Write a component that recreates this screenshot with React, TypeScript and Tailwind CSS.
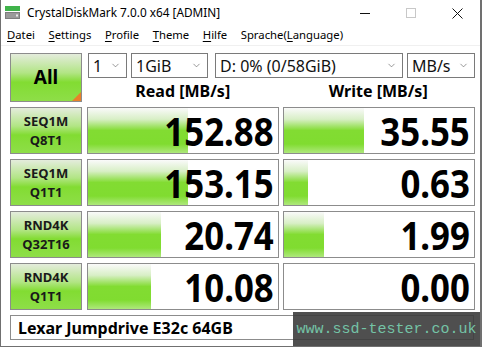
import { ChevronDown } from "lucide-react";

const font = "font-['Segoe_UI','Noto_Sans','Open_Sans',sans-serif]";

const rows = [
  { a: "SEQ1M", b: "Q8T1", read: "152.88", write: "35.55", rw: 100, ww: 80 },
  { a: "SEQ1M", b: "Q1T1", read: "153.15", write: "0.63", rw: 100, ww: 24 },
  { a: "RND4K", b: "Q32T16", read: "20.74", write: "1.99", rw: 73, ww: 40 },
  { a: "RND4K", b: "Q1T1", read: "10.08", write: "0.00", rw: 63, ww: 0 },
];

const menu = [
  ["D", "atei"],
  ["S", "ettings"],
  ["P", "rofile"],
  ["T", "heme"],
  ["H", "ilfe"],
];

function Select({ w, text }: { w: string; text: string }) {
  return (
    <div
      className={`${w} h-[25px] border border-[#7a7a7a] bg-white flex items-center justify-between pl-[4px] pr-[5px] text-[16px] text-[#111]`}
    >
      <span className="leading-none">{text}</span>
      <ChevronDown size={11} strokeWidth={1.3} className="text-[#555]" />
    </div>
  );
}

function Cell({ value, bar }: { value: string; bar: number }) {
  return (
    <div className="relative w-[192px] h-full border border-[#8c8c8c] bg-white">
      {bar > 0 && (
        <div
          className="absolute left-0 top-0 bottom-0 bg-[linear-gradient(to_bottom,#fafafa_0%,#d8efc6_25%,#82dc32_50%,#80dc30_80%,#aee87c_100%)]"
          style={{ width: bar }}
        />
      )}
      <div className="relative h-full flex items-center justify-end pr-[4px] pt-[1px]">
        <span className="inline-block scale-x-[0.87] origin-right text-[40px] font-bold leading-none text-[#000]">
          {value}
        </span>
      </div>
    </div>
  );
}

export default function App() {
  return (
    <div
      className={`${font} w-[482px] h-[347px] overflow-hidden bg-white border-l border-r-2 border-b border-[#707070] relative text-[#000]`}
    >
      {/* title bar */}
      <div className="h-[26px] flex items-center">
        <svg width="16" height="16" viewBox="0 0 16 16" className="ml-[4px] mr-[6px]">
          <rect x="0" y="1" width="15" height="5" fill="#3fb34a" />
          <rect x="0" y="7" width="15" height="7" fill="#7d7d7d" />
          <rect x="1" y="8" width="13" height="5" fill="#9a9a9a" />
          <rect x="11" y="9.5" width="2" height="2" fill="#e8e8e8" />
        </svg>
        <span className="text-[11.8px]">CrystalDiskMark 7.0.0 x64 [ADMIN]</span>
        <div className="ml-auto flex items-center h-full">
          <div className="w-[46px] h-full flex items-center justify-center">
            <div className="w-[10px] h-px bg-[#111]" />
          </div>
          <div className="w-[46px] h-full flex items-center justify-center">
            <div className="w-[10px] h-[10px] border border-[#c8c8c8]" />
          </div>
          <div className="w-[46px] h-full flex items-center justify-center">
            <svg width="11" height="11" viewBox="0 0 11 11">
              <path d="M0.5 0.5L10.5 10.5M10.5 0.5L0.5 10.5" stroke="#111" strokeWidth="1" />
            </svg>
          </div>
        </div>
      </div>

      {/* menu */}
      <div className="h-[20px] flex items-center gap-[13.5px] pl-[6px] text-[11.3px] border-b border-[#f0f0f0]">
        {menu.map(([u, rest]) => (
          <span key={u}>
            <span className="underline underline-offset-2">{u}</span>
            {rest}
          </span>
        ))}
        <span>
          Sprache(<span className="underline underline-offset-2">L</span>anguage)
        </span>
      </div>

      {/* content */}
      <div className="pl-[9px] pt-[7px] flex flex-col gap-[5px]">
        <div className="flex gap-[5px] h-[49px]">
          <div className="relative w-[72px] h-full border border-[#8c8c8c] bg-[linear-gradient(to_bottom,#e4ecdc_0%,#b2e585_40%,#82dc32_60%,#8ede48_100%)] flex items-center justify-center text-[19px] font-bold">
            All
            <div className="absolute right-0 bottom-0 w-0 h-0 border-l-[9px] border-l-transparent border-b-[9px] border-b-[#e8812a]" />
          </div>
          <div className="flex flex-col w-[387px]">
            <div className="flex items-center">
              <div className="ml-[1px]">
                <Select w="w-[39px]" text="1" />
              </div>
              <div className="ml-[4px]">
                <Select w="w-[77px]" text="1GiB" />
              </div>
              <div className="ml-[7px]">
                <Select w="w-[188px]" text="D: 0% (0/58GiB)" />
              </div>
              <div className="ml-[4px]">
                <Select w="w-[68px]" text="MB/s" />
              </div>
            </div>
            <div className="flex mt-[1px] text-[16px] font-bold">
              <div className="w-[192px] text-center">Read [MB/s]</div>
              <div className="ml-[4px] w-[192px] text-center">Write [MB/s]</div>
            </div>
          </div>
        </div>

        {rows.map((r, i) => (
          <div key={i} className="flex gap-[5px] h-[47px]">
            <div className="w-[72px] h-full border border-[#8c8c8c] bg-[linear-gradient(to_bottom,#e4ecdc_0%,#b2e585_40%,#82dc32_60%,#8ede48_100%)] flex flex-col items-center justify-center text-[13px] font-bold leading-[19px] text-[#1a1a1a]">
              <span>{r.a}</span>
              <span>{r.b}</span>
            </div>
            <div className="flex gap-[4px]">
              <Cell value={r.read} bar={r.rw} />
              <Cell value={r.write} bar={r.ww} />
            </div>
          </div>
        ))}

        <div className="w-[464px] h-[25px] border border-[#8c8c8c] bg-white flex items-center pl-[7px] text-[16px] font-bold">
          Lexar Jumpdrive E32c 64GB
        </div>
      </div>

      {/* watermark */}
      <div className="absolute left-[292px] top-[312px] right-0 bottom-0 bg-[#3c3c3c]/90 flex items-center justify-center pt-[2px]">
        <span className="font-['Liberation_Mono',monospace] text-[15px] text-[#74c3a6]">www.ssd-tester.co.uk</span>
      </div>
    </div>
  );
}
